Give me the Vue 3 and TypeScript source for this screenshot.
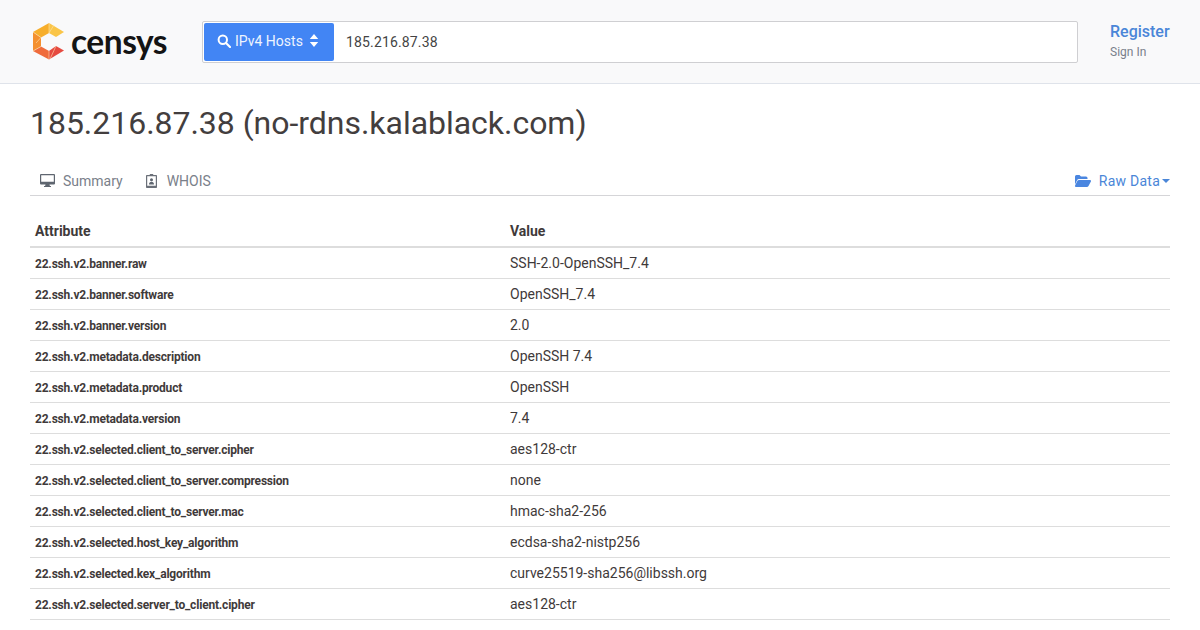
<template>
  <div class="page">
    <header class="topbar">
      <a class="logo">
        <svg class="logo-mark" width="33" height="38" viewBox="0 0 33 38">
          <polygon points="1,9 17,0 17,10 9,14.500" fill="#f7ae2b" />
          <polygon points="17,0 32,9 24,14 17,10" fill="#fac548" />
          <polygon points="1,9 9,14.500 9,23.500 1,28" fill="#f4902f" />
          <polygon points="1,28 9,23.500 17,28 17,36.500" fill="#ef6b3b" />
          <polygon points="17,28 24,23 32,27.500 17,36.500" fill="#e64a40" />
          <path d="M1 9l8 5.500M17 0v10M1 28l8-4.500M17 28v8.500M9 14.500L4 20M22 2l-5 8M24 23l-6 13" stroke="#fde3b0" stroke-width=".6" fill="none" />
        </svg>
        <span class="logo-text">censys</span>
      </a>
      <div class="search">
        <button class="search-type">
          <svg width="14" height="14" viewBox="0 0 14 14"><circle cx="5.800" cy="5.800" r="4.200" fill="none" stroke="#fff" stroke-width="2" /><path d="M9 9l4 4" stroke="#fff" stroke-width="2.200" stroke-linecap="round" /></svg>
          <span>IPv4 Hosts</span>
          <svg class="updown" width="10" height="13" viewBox="0 0 10 13"><path d="M5 0l4.200 5H.8zM5 13L.8 8h8.400z" fill="#fff" /></svg>
        </button>
        <div class="search-input">185.216.87.38</div>
      </div>
      <div class="auth">
        <a class="register">Register</a>
        <a class="signin">Sign In</a>
      </div>
    </header>
    <main class="content">
      <h1 class="title">185.216.87.38 (no-rdns.kalablack.com)</h1>
      <nav class="tabs">
        <a class="tab">
          <svg width="15" height="13" viewBox="0 0 15 13"><path d="M1 0h13a1 1 0 0 1 1 1v8.500a1 1 0 0 1-1 1H9.500l.4 1.500H11v1H4v-1h1.100l.4-1.500H1a1 1 0 0 1-1-1V1a1 1 0 0 1 1-1zm.2 1.200v6.600h12.600V1.200z" fill="#5f6670" /></svg>
          <span>Summary</span>
        </a>
        <a class="tab whois">
          <svg width="11" height="14" viewBox="0 0 11 14"><path d="M.8 1h3V0h3.400v1h3a.8.8 0 0 1 .8.800v11.400a.8.8 0 0 1-.8.800H.8a.8.8 0 0 1-.8-.8V1.800A.8.8 0 0 1 .8 1zm.4 1.200v9.600h8.600V2.200z" fill="#6b7079" /><path d="M5.500 4.300a1.500 1.500 0 1 1 0 3 1.500 1.500 0 0 1 0-3zM3 10.500c0-1.700 1-2.700 2.500-2.700s2.500 1 2.500 2.700z" fill="#5f6670" /></svg>
          <span>WHOIS</span>
        </a>
        <a class="raw">
          <svg width="16" height="12" viewBox="0 0 16 12"><path d="M0 1.500A1.500 1.500 0 0 1 1.500 0h3L6 1.500h5A1.500 1.500 0 0 1 12.500 3v1H4a2 2 0 0 0-1.800 1.100L0 9.500zM4 5h11a1 1 0 0 1 .9 1.400L13.500 11a2 2 0 0 1-1.800 1H1a1 1 0 0 1-.9-1.400L2.300 6A2 2 0 0 1 4 5z" fill="#4a86e0" /></svg>
          <span class="raw-label">Raw Data</span>
          <i class="caret"></i>
        </a>
      </nav>
      <table class="attrs">
        <thead>
          <tr><th>Attribute</th><th>Value</th></tr>
        </thead>
        <tbody>
          <tr v-for="row in rows" :key="row[0]">
            <td class="key">{{ row[0] }}</td>
            <td class="val">{{ row[1] }}</td>
          </tr>
        </tbody>
      </table>
    </main>
  </div>
</template>

<script setup lang="ts">
const rows: [string, string][] = [
  ['22.ssh.v2.banner.raw', 'SSH-2.0-OpenSSH_7.4'],
  ['22.ssh.v2.banner.software', 'OpenSSH_7.4'],
  ['22.ssh.v2.banner.version', '2.0'],
  ['22.ssh.v2.metadata.description', 'OpenSSH 7.4'],
  ['22.ssh.v2.metadata.product', 'OpenSSH'],
  ['22.ssh.v2.metadata.version', '7.4'],
  ['22.ssh.v2.selected.client_to_server.cipher', 'aes128-ctr'],
  ['22.ssh.v2.selected.client_to_server.compression', 'none'],
  ['22.ssh.v2.selected.client_to_server.mac', 'hmac-sha2-256'],
  ['22.ssh.v2.selected.host_key_algorithm', 'ecdsa-sha2-nistp256'],
  ['22.ssh.v2.selected.kex_algorithm', 'curve25519-sha256@libssh.org'],
  ['22.ssh.v2.selected.server_to_client.cipher', 'aes128-ctr']
]
</script>

<style>
html, body { background: #fff; overflow: hidden; }
</style>

<style scoped>
.page {
  width: 1200px;
  height: 630px;
  overflow: hidden;
  font-family: Roboto, sans-serif;
  color: #3f3a3a;
}

.topbar {
  height: 84px;
  box-sizing: border-box;
  background: #f9f9fa;
  border-bottom: 1px solid #dfe3ea;
  display: flex;
  align-items: center;
  padding: 0 30px;
}

.logo {
  display: flex;
  align-items: center;
  gap: 6px;
  width: 172px;
  padding-left: 2px;
  box-sizing: border-box;
}

.logo-mark {
  margin-top: 1px;
}

.logo-text {
  font-family: Lato, sans-serif;
  font-size: 33.5px;
  font-weight: 700;
  letter-spacing: -.5px;
  color: #141414;
  line-height: 1;
  margin-top: 1px;
}

.search {
  width: 876px;
  height: 42px;
  box-sizing: border-box;
  display: flex;
  background: #fff;
  border: 1px solid #cfcfd2;
  border-radius: 2px;
  padding: 1px;
}

.search-type {
  width: 130px;
  border: 0;
  background: #4285f4;
  color: #eef4fe;
  border-radius: 2px;
  font: 14px Roboto, sans-serif;
  display: flex;
  align-items: center;
  padding: 0 0 2px 13px;
  gap: 4px;
}

.updown {
  margin-left: 2px;
}

.search-input {
  flex: 1;
  display: flex;
  align-items: center;
  padding-left: 12px;
  font-size: 14px;
  letter-spacing: .15px;
  color: #444;
}

.auth {
  margin-left: auto;
  width: 60px;
  display: flex;
  flex-direction: column;
  gap: 4px;
  margin-top: -2px;
}

.register {
  font-size: 16px;
  font-weight: 500;
  color: #4a86d8;
}

.signin {
  font-size: 12px;
  color: #7a7f8a;
}

.content {
  padding: 0 30px;
}

.title {
  margin: 0;
  padding-top: 19px;
  font-size: 32px;
  font-weight: 400;
  line-height: 40px;
  letter-spacing: -.03px;
  color: #433e3e;
}

.tabs {
  display: flex;
  align-items: center;
  gap: 23px;
  margin-top: 23px;
  height: 30px;
  box-sizing: border-box;
  border-bottom: 1px solid #d5d5d8;
  padding-left: 10px;
}

.tab {
  display: flex;
  align-items: center;
  gap: 8px;
  font-size: 14px;
  color: #7a7f8a;
}

.whois {
  gap: 10px;
}

.raw {
  margin-left: auto;
  display: flex;
  align-items: center;
  gap: 8px;
  font-size: 14px;
  color: #4a86d8;
}

.raw-label {
  letter-spacing: .25px;
}

.caret {
  margin-left: -6px;
  border-top: 4px solid #4a86d8;
  border-left: 4px solid transparent;
  border-right: 4px solid transparent;
}

.attrs {
  width: 100%;
  border-collapse: collapse;
  table-layout: fixed;
}

.attrs th {
  height: 51px;
  box-sizing: border-box;
  padding: 19px 5px 0;
  border-bottom: 2px solid #ddd;
  text-align: left;
  font-size: 14px;
  font-weight: 700;
}

.attrs td {
  height: 31px;
  box-sizing: border-box;
  padding: 0 5px;
  border-bottom: 1px solid #ddd;
}

.attrs td.key {
  padding-top: 2px;
  font-size: 12px;
  font-weight: 700;
  letter-spacing: -.2px;
}

.val {
  font-size: 14px;
}

.attrs th:first-child {
  width: 475px;
}
</style>
